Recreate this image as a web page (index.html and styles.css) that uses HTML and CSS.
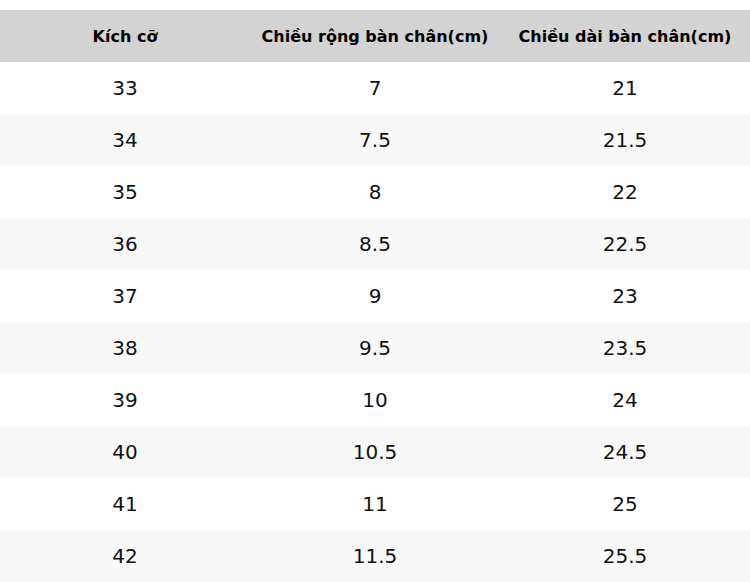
FILE: index.html
```html
<!DOCTYPE html>
<html lang="vi">
<head>
<meta charset="utf-8">
<link rel="stylesheet" href="styles.css">
</head>
<body>
<table class="size-table">
<thead>
<tr><th>Kích cỡ</th><th>Chiều rộng bàn chân(cm)</th><th>Chiều dài bàn chân(cm)</th></tr>
</thead>
<tbody>
<tr><td>33</td><td>7</td><td>21</td></tr>
<tr><td>34</td><td>7.5</td><td>21.5</td></tr>
<tr><td>35</td><td>8</td><td>22</td></tr>
<tr><td>36</td><td>8.5</td><td>22.5</td></tr>
<tr><td>37</td><td>9</td><td>23</td></tr>
<tr><td>38</td><td>9.5</td><td>23.5</td></tr>
<tr><td>39</td><td>10</td><td>24</td></tr>
<tr><td>40</td><td>10.5</td><td>24.5</td></tr>
<tr><td>41</td><td>11</td><td>25</td></tr>
<tr><td>42</td><td>11.5</td><td>25.5</td></tr>
</tbody>
</table>
</body>
</html>
```
FILE: styles.css
```css
html, body {
  margin: 0;
  padding: 0;
  background: #ffffff;
}
body {
  padding-top: 10px;
  font-family: "DejaVu Sans", sans-serif;
  color: #111111;
}
.size-table {
  width: 750px;
  border-collapse: collapse;
  table-layout: fixed;
}
.size-table th,
.size-table td {
  width: 250px;
  height: 52px;
  padding: 0;
  text-align: center;
  vertical-align: middle;
}
.size-table th {
  background: #d3d3d3;
  font-size: 16px;
  font-weight: bold;
  color: #000000;
}
.size-table td {
  font-size: 20px;
}
.size-table tbody tr:nth-child(even) {
  background: #f8f8f8;
}
```
